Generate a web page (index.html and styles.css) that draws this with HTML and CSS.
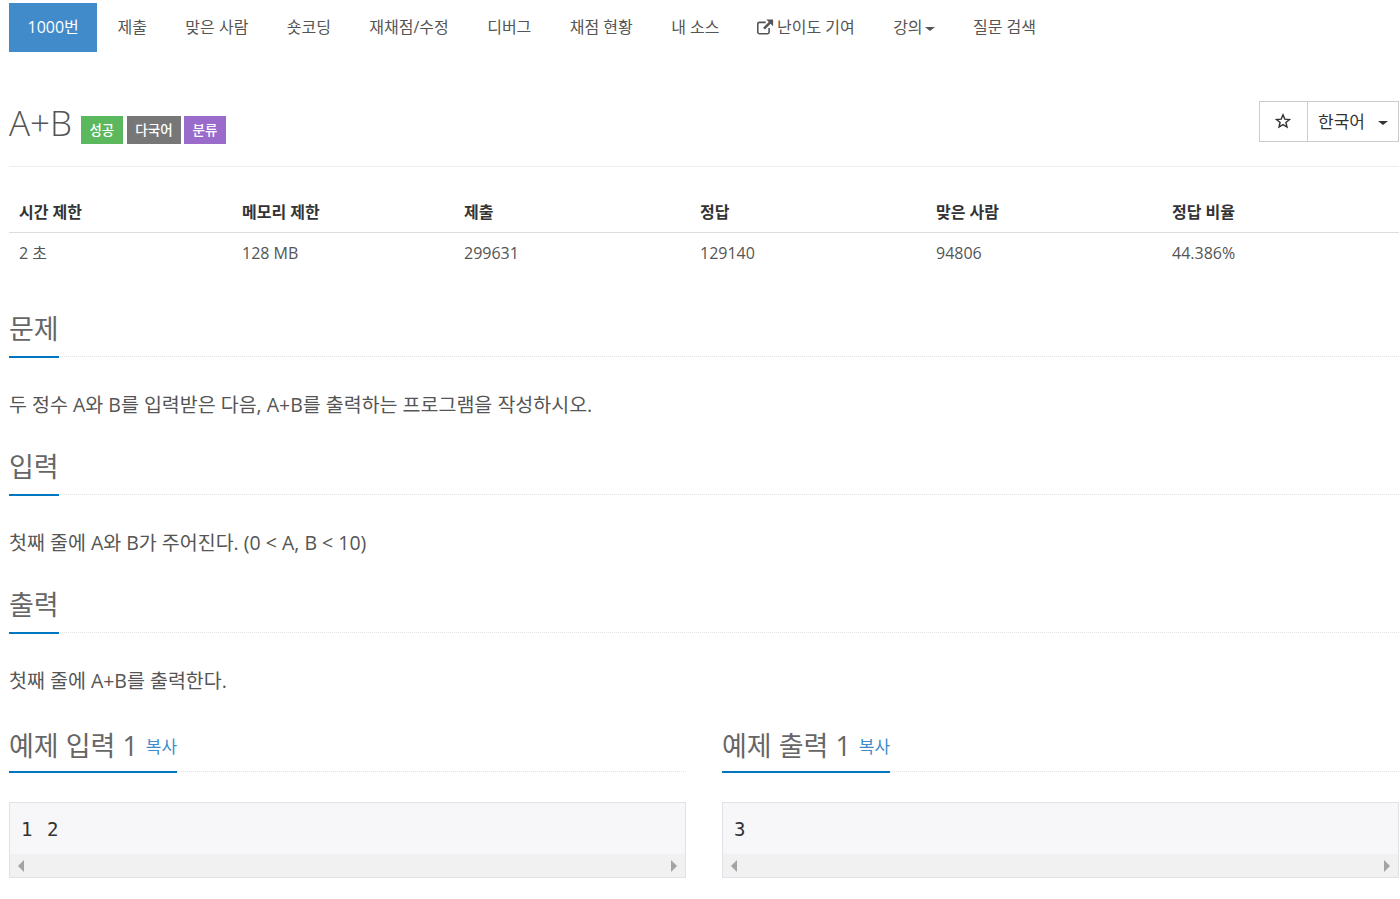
FILE: index.html
```html
<!DOCTYPE html>
<html lang="ko">
<head>
<meta charset="utf-8">
<title>A+B</title>
<link rel="stylesheet" href="styles.css">
</head>
<body>
<div class="page">
  <ul class="tabs">
    <li class="tab active">1000번</li>
    <li class="tab">제출</li>
    <li class="tab">맞은 사람</li>
    <li class="tab">숏코딩</li>
    <li class="tab">재채점/수정</li>
    <li class="tab">디버그</li>
    <li class="tab">채점 현황</li>
    <li class="tab">내 소스</li>
    <li class="tab"><svg class="ext" viewBox="1.300 1 15 15" width="17" height="17"><path d="M12 9v3.500A1.500 1.500 0 0 1 10.500 14h-7A1.500 1.500 0 0 1 2 12.500v-7A1.500 1.500 0 0 1 3.500 4H9" fill="none" stroke="#555" stroke-width="1.400"/><path d="M9.500 1.500H15.500V7.500L13.300 5.300 8.300 10.300 6.700 8.700 11.700 3.700Z" fill="#555"/></svg> 난이도 기여</li>
    <li class="tab">강의<span class="caret"></span></li>
    <li class="tab">질문 검색</li>
  </ul>

  <div class="header">
    <div class="title-group">
      <h1 class="title">A+B</h1>
      <span class="label green">성공</span>
      <span class="label gray">다국어</span>
      <span class="label purple">분류</span>
    </div>
    <div class="btn-group">
      <span class="btn star"><svg viewBox="0 0 16 16" width="16" height="16"><path d="M8 1.800 9.800 6.100 14.500 6.500 10.900 9.500 12 14 8 11.600 4 14 5.100 9.500 1.500 6.500 6.200 6.100Z" fill="none" stroke="#333" stroke-width="1.400" stroke-linejoin="miter"/></svg></span>
      <span class="btn lang">한국어<span class="caret dark"></span></span>
    </div>
  </div>

  <table class="info">
    <thead>
      <tr><th class="c1">시간 제한</th><th class="c2">메모리 제한</th><th class="c3">제출</th><th class="c4">정답</th><th class="c4">맞은 사람</th><th>정답 비율</th></tr>
    </thead>
    <tbody>
      <tr><td>2 초</td><td>128 MB</td><td>299631</td><td>129140</td><td>94806</td><td>44.386%</td></tr>
    </tbody>
  </table>

  <section class="sec">
    <div class="headline"><h2><span class="hl">문제</span></h2></div>
    <p class="text">두 정수 A와 B를 입력받은 다음, A+B를 출력하는 프로그램을 작성하시오.</p>
  </section>
  <section class="sec">
    <div class="headline"><h2><span class="hl">입력</span></h2></div>
    <p class="text">첫째 줄에 A와 B가 주어진다. (0 &lt; A, B &lt; 10)</p>
  </section>
  <section class="sec">
    <div class="headline"><h2><span class="hl">출력</span></h2></div>
    <p class="text">첫째 줄에 A+B를 출력한다.</p>
  </section>

  <div class="samples">
    <div class="sample">
      <div class="headline"><h2><span class="hl">예제 입력 1 <a class="copy">복사</a></span></h2></div>
      <div class="pre"><div class="code">1 2</div><div class="scroll"><i class="arr left"></i><i class="arr right"></i></div></div>
    </div>
    <div class="sample">
      <div class="headline"><h2><span class="hl">예제 출력 1 <a class="copy">복사</a></span></h2></div>
      <div class="pre"><div class="code">3</div><div class="scroll"><i class="arr left"></i><i class="arr right"></i></div></div>
    </div>
  </div>
</div>
</body>
</html>
```
FILE: styles.css
```css
* { box-sizing: border-box; }
html, body { margin: 0; padding: 0; background: #fff; }
body {
  font-family: "Open Sans", "Noto Sans CJK KR", sans-serif;
  font-size: 16px;
  line-height: 20px;
  color: #555;
  overflow: hidden;
}
.page { padding: 3px 1px 0 9px; width: 1400px; }

.tabs { display: flex; list-style: none; margin: 0; padding: 0; height: 49px; }
.tab { padding: 14px 19.200px; height: 49px; font-size: 16px; white-space: nowrap; color: #555; }
.tab.active { background: #428bca; color: #fff; padding: 14px 18.500px; margin-right: 1px; }
.ext { vertical-align: -3px; margin-left: -1px; margin-right: -1px; }
.caret {
  display: inline-block; width: 0; height: 0; margin-left: 2px; vertical-align: middle;
  border-top: 4px solid #555; border-left: 5px solid transparent; border-right: 5px solid transparent;
}
.caret.dark { border-top-color: #333; margin-left: 13px; }

.header {
  display: flex; justify-content: space-between; align-items: flex-start;
  margin-top: 49px; height: 66px; border-bottom: 1px solid #eee;
}
.title-group { display: flex; align-items: flex-start; }
.title { margin: 1px 0 0; font-size: 35px; line-height: 42px; font-weight: 300; color: #555; }
.label {
  display: inline-block; height: 28px; margin-top: 15px; padding: 4px 8.500px; line-height: 20px;
  font-size: 13.500px; font-weight: 500; color: #fff;
}
.green { background: #5cb85c; margin-left: 9px; }
.gray { background: #777; margin-left: 4px; }
.purple { background: #9b6bcc; margin-left: 3px; }
.btn-group { display: flex; }
.btn {
  display: block; height: 41px; border: 1px solid #ccc; color: #333; font-size: 17px; line-height: 40px;
}
.star { width: 49px; display: flex; align-items: center; justify-content: center; padding: 0 2px 2px 0; }
.lang { width: 91px; border-left: 0; padding-left: 10px; white-space: nowrap; }

.info { width: 1390px; border-collapse: collapse; margin-top: 24px; table-layout: fixed; }
.info th {
  text-align: left; font-weight: 700; color: #333; padding: 9px 10px 7px; height: 41px;
  border-bottom: 1px solid #ddd;
}
.info td { padding: 10px 10px 9px; color: #555; height: 40px; font-size: 16px; }
.c1 { width: 223px; }
.c2 { width: 222px; }
.info .c3, .info .c4 { width: 236px; }

.headline { height: 44px; border-bottom: 1px dotted #e4e4e4; }
.headline h2 { margin: 0; height: 44px; font-size: 27px; font-weight: 400; line-height: 32px; color: #666; }
.hl { display: inline-block; height: 45px; border-bottom: 2px solid #0076c0; }
.info + .sec { margin-top: 41px; }
.text { margin: 0; padding: 35px 0 0; font-size: 19.500px; line-height: 26px; color: #555; height: 94px; }
.samples { display: grid; grid-template-columns: 677px 677px; column-gap: 36px; }
.sample .headline { height: 43px; margin-top: 2px; }
.sample .headline h2 { line-height: 33px; }
.sample .hl { height: 44px; }
.copy { font-size: 17px; color: #428bca; margin-left: 1px; vertical-align: 3px; }
.pre {
  margin-top: 30px; height: 76px; border: 1px solid #e1e1e8; background: #f7f7f9; display: flex; flex-direction: column;
}
.code { flex: 1; padding: 13px 11px 0; font-family: "DejaVu Sans Mono", monospace; font-size: 19px; line-height: 26px; color: #333; word-spacing: 3.200px; }
.scroll { height: 23px; background: #f1f1f1; display: flex; justify-content: space-between; align-items: center; padding: 0 8px; }
.arr { display: block; width: 0; height: 0; border-top: 6px solid transparent; border-bottom: 6px solid transparent; }
.arr.left { border-right: 6px solid #a3a3a3; }
.arr.right { border-left: 6px solid #a3a3a3; }
```
